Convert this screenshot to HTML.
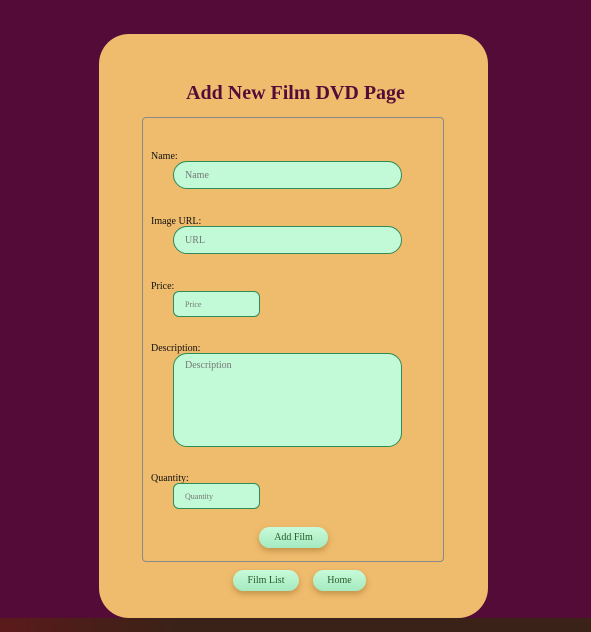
<!DOCTYPE html>
<html><head><style>
body{margin:0;width:591px;height:632px;background:#550b37;position:relative;overflow:hidden;font-family:"Liberation Serif",serif}
.card{position:absolute;left:99px;top:34px;width:389px;height:584px;background:#efbb6d;border-radius:30px}
h1{position:absolute;left:0;width:100%;text-align:center;top:82px;margin:0;font-size:20px;color:#550b37;font-weight:bold}
.fs{position:absolute;left:142px;top:117px;width:300px;height:443px;border:1px solid #8a8a8a;border-radius:4px}
.lbl{position:absolute;left:151px;font-size:10px;color:#111}
.in{position:absolute;background:#c2fad8;border:1px solid #2e8b57;box-sizing:border-box;color:#777;font-size:10px;padding-left:11px}
.btn{position:absolute;background:linear-gradient(#c7fbd9,#a5eac0);border-radius:12px;color:#2a5a2a;font-size:10px;text-align:center;box-shadow:0 3px 6px rgba(150,110,40,.5);line-height:21px;height:21px}
.bar{position:absolute;left:0;top:618px;width:591px;height:14px;background:linear-gradient(90deg,#5a1a1a,#3a2218 30%,#3a2218)}
</style></head><body>
<div class="card"></div>
<h1>Add New Film DVD Page</h1>
<div class="fs"></div>
<div class="lbl" style="top:151px">Name:</div>
<div class="in" style="left:173px;top:161px;width:229px;height:28px;border-radius:14px;line-height:28px">Name</div>
<div class="lbl" style="top:216px">Image URL:</div>
<div class="in" style="left:173px;top:226px;width:229px;height:28px;border-radius:14px;line-height:28px">URL</div>
<div class="lbl" style="top:281px">Price:</div>
<div class="in" style="left:173px;top:291px;width:87px;height:26px;border-radius:6px;line-height:26px;font-size:8px">Price</div>
<div class="lbl" style="top:343px">Description:</div>
<div class="in" style="left:173px;top:353px;width:229px;height:94px;border-radius:14px;padding-top:6px">Description</div>
<div class="lbl" style="top:473px">Quantity:</div>
<div class="in" style="left:173px;top:483px;width:87px;height:26px;border-radius:6px;line-height:26px;font-size:8px">Quantity</div>
<div class="btn" style="left:259px;top:527px;width:69px;line-height:22px">Add Film</div>
<div class="btn" style="left:233px;top:570px;width:66px;line-height:22px">Film List</div>
<div class="btn" style="left:313px;top:570px;width:53px;line-height:22px">Home</div>
<div class="bar"></div>
</body></html>
